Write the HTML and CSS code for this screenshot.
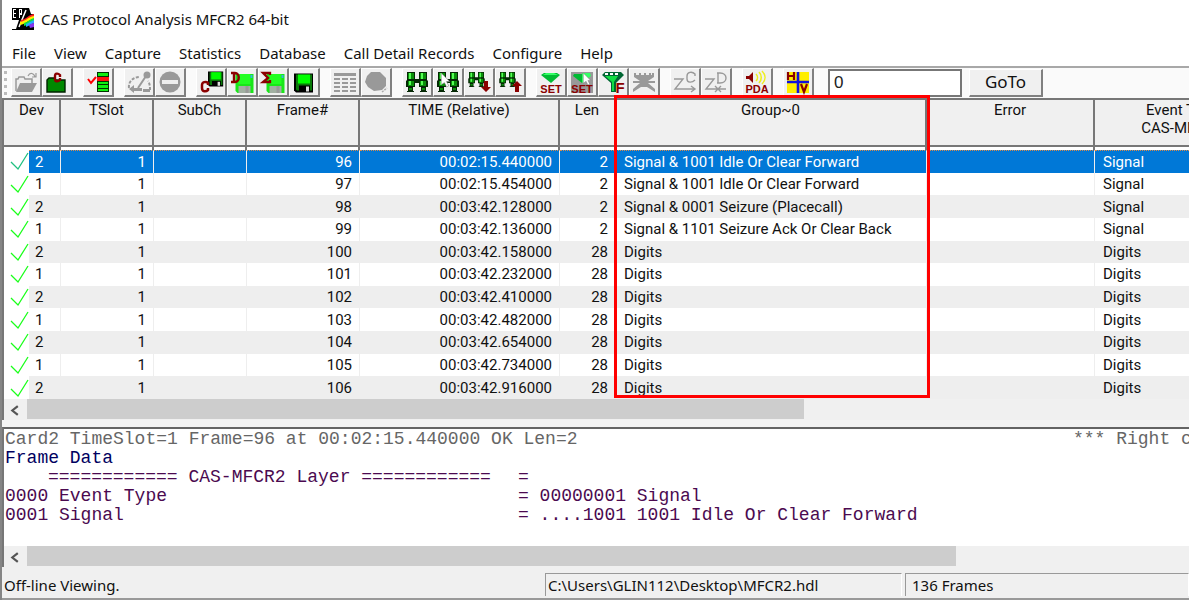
FILE: index.html
```html
<!DOCTYPE html>
<html lang="en">
<head>
<meta charset="utf-8">
<title>CAS Protocol Analysis MFCR2 64-bit</title>
<link rel="stylesheet" href="styles.css">
</head>
<body>
<svg class="defs" aria-hidden="true">
  <symbol id="check" viewBox="0 0 25 22"><path d="M7 12l7 7L24 3" fill="none" stroke="currentColor" stroke-width="1.3"/></symbol>
  <symbol id="disk" viewBox="0 0 20 19">
    <path d="M0 0h19v19H2L0 17z" fill="#000"/><path d="M2 1h16v16H3l-1-1z" fill="#0a7a0a"/>
    <path d="M4 1h12v9H4z" fill="#0f0"/><path d="M5 12h11v6H5z" fill="#000"/><path d="M12 13h3v5h-3z" fill="#ddd"/>
  </symbol>
  <symbol id="disklight" viewBox="0 0 18 19">
    <path d="M0 0h18v19H2L0 17z" fill="#19e619"/><path d="M3 0h12v10H3z" fill="#2f2"/>
    <path d="M3 12h12v7H3z" fill="#a2b0a2"/><path d="M10 12h3v7h-3z" fill="#999"/><path d="M15 1h2v3h-2z" fill="#3bd"/>
  </symbol>
  <symbol id="binoc" viewBox="0 0 22 20">
    <path d="M1 0h8v7h4V0h8v8l1 1v6h-2v4h1v1h-7v-1h1v-4h-2v-4H9v4H7v4h1v1H1v-1h1v-4H0V9l1-1z" fill="#052805"/>
    <path d="M2 1h6v6H2zM14 1h6v6h-6zM2 9h6v5H2zM14 9h6v5h-6zM3 16h3v2H3zM16 16h3v2h-3z" fill="#0a8f0a"/>
    <path d="M3 1h2v6H3zM15 1h2v6h-2zM3 9h2v4H3zM15 9h2v4h-2z" fill="#5f5"/>
  </symbol>
  <symbol id="cursor" viewBox="0 0 10 14"><path d="M1 0v11l3-2 2 4 2-1-2-4h3z" fill="#fff" stroke="#777" stroke-width=".5"/></symbol>
</svg>

<main class="window">
  <header class="titlebar">
    <svg class="app-icon" viewBox="0 0 22 22" aria-hidden="true">
      <path d="M0 0h22v22H0z" fill="#000"/>
      <path d="M1 1h3v1H2v3h2v1H2v3h2v1H1zM5 1h5v6H8v3H7V1zM17 0h5v6h-3zM0 12h7l-3 9H0z" fill="#fff"/>
      <path d="M8 2h1v3H8z" fill="#000"/>
      <path d="M14 2L7 19" stroke="#fff" stroke-width="1.5"/>
      <path d="M9 12c6-1 7-5 13-6v3c-7 1-8 5-14 6z" fill="#f22"/>
      <path d="M8 14c6-1 8-5 14-6v3c-6 1-8 5-14 6z" fill="#fe0"/>
      <path d="M12 15c4-1 6-4 10-5v3c-4 1-6 4-10 5z" fill="#1d4"/>
      <path d="M14 16c3-1 5-3 8-4v3c-3 1-5 3-8 4z" fill="#2af"/>
      <path d="M17 17c2-1 3-2 5-2v4l-4 1z" fill="#83e"/>
    </svg>
    <h1>CAS Protocol Analysis MFCR2 64-bit</h1>
  </header>

  <nav class="menu">
    <a href="#">File</a><a href="#">View</a><a href="#">Capture</a><a href="#">Statistics</a><a href="#">Database</a><a href="#">Call Detail Records</a><a href="#">Configure</a><a href="#">Help</a>
  </nav>

  <div class="toolbar">
    <span class="grip"></span>
    <div class="group">
      <button aria-label="Open"><svg viewBox="0 0 28 26"><path d="M4 22V10h2l1-2h5l1 2h7v4" fill="#eee" stroke="#999" stroke-width="1.5"/><path d="M4 23l4-9h17l-5 9z" fill="#999"/><path d="M16 7c2-4 6-3 7 1m-3 0h4V4" fill="none" stroke="#999" stroke-width="1.2"/></svg></button>
      <button aria-label="Close capture"><svg viewBox="0 0 28 26"><path d="M4 23V11l2-2h5l2 2h9v12z" fill="#080" stroke="#020" stroke-width="1.4"/><path d="M17 8V6c-2-2-5-2-5 1v3c0 3 3 3 5 1v-2" fill="none" stroke="#8b0000" stroke-width="2.4"/></svg></button>
    </div>
    <div class="group">
      <button aria-label="Filter frames"><svg viewBox="0 0 28 26"><path d="M4 10l3 4 5-6" fill="none" stroke="red" stroke-width="2"/><path d="M13 3h12v20H13z" fill="#030"/><path d="M14 4h10v3H14zM14 13h10v2H14zM14 16h10v3H14zM14 20h10v2H14z" fill="#1e1"/><path d="M13 8h12v4H13z" fill="#f11"/></svg></button>
    </div>
    <div class="group">
      <button aria-label="Start capture"><svg viewBox="0 0 28 26"><path d="M4 19c-1-6 4-11 11-11M25 21c0-3 0-6-2-9" fill="none" stroke="#999" stroke-width="2" stroke-dasharray="3 1.5"/><path d="M13 19l8-12" stroke="#999" stroke-width="2"/><circle cx="22" cy="6" r="3.5" fill="#999"/><path d="M4 20l5-4v3h8v3H9v2zM18 20h7v3h-7z" fill="#999"/></svg></button>
      <button aria-label="Stop capture"><svg viewBox="0 0 28 26"><circle cx="14" cy="13" r="10.5" fill="#999"/><path d="M6 11h16v4H6z" fill="#eee"/></svg></button>
    </div>
    <div class="group">
      <button aria-label="Save capture"><svg viewBox="0 0 28 26"><use href="#disk" x="11" y="2" width="16" height="16"/><path d="M11 16v-2c-2-2-6-1-6 2v3c0 4 4 4 6 2v-2" fill="none" stroke="#8b0000" stroke-width="2.5"/></svg></button>
      <button aria-label="Save data"><svg viewBox="0 0 28 26"><use href="#disklight" x="7" y="5" width="19" height="19"/><path d="M3 4h4c5 0 5 9 0 9H3m3-9v9" fill="none" stroke="#8b0000" stroke-width="2.4"/></svg></button>
      <button aria-label="Save summary"><svg viewBox="0 0 28 26"><use href="#disklight" x="7" y="5" width="19" height="19"/><path d="M11 6V4H4l5 5-5 4h7v-2" fill="none" stroke="#8b0000" stroke-width="2.3"/></svg></button>
      <button aria-label="Save"><svg viewBox="0 0 28 26"><use href="#disk" x="4" y="4" width="20" height="20"/></svg></button>
    </div>
    <div class="group">
      <button aria-label="Table"><svg viewBox="0 0 28 26"><path d="M3 4h22v3H3z" fill="#999"/><path d="M3 10h22M3 14h22M3 18h22M3 22h22" stroke="#999" stroke-width="1.8" stroke-dasharray="6 2"/></svg></button>
      <button aria-label="Chart"><svg viewBox="0 0 28 26"><path d="M9 3h9l6 6v8l-4 4-8 1-6-4-3-5 2-6z" fill="#999"/><path d="M20 23l5-4" stroke="#aaa" stroke-width="1.5" stroke-dasharray="2 1"/></svg></button>
    </div>
    <div class="group">
      <button aria-label="Find"><svg viewBox="0 0 28 26"><use href="#binoc" x="3" y="3" width="22" height="20"/></svg></button>
      <button aria-label="Find selected"><svg viewBox="0 0 28 26"><use href="#binoc" x="3" y="3" width="22" height="20"/><use href="#cursor" x="6" y="4" width="11" height="15"/></svg></button>
      <button aria-label="Find next"><svg viewBox="0 0 28 26"><use href="#binoc" x="3" y="3" width="17" height="15"/><path d="M19 12h4v6h3l-5 5-5-5h3z" fill="#8b0000"/></svg></button>
      <button aria-label="Find previous"><svg viewBox="0 0 28 26"><use href="#binoc" x="3" y="3" width="17" height="15"/><path d="M19 23h4v-6h3l-5-5-5 5h3z" fill="#8b0000"/></svg></button>
    </div>
    <div class="group">
      <button aria-label="Set filter"><svg viewBox="0 0 28 26"><path d="M4 6l3-2h13l3 2-9 8z" fill="#0b3"/><path d="M6 6h15l-4-2H9z" fill="#3f6"/><text x="14" y="24" class="tag">SET</text></svg></button>
      <button aria-label="Set filter from selection"><svg viewBox="0 0 28 26"><path d="M3 3h22v21H3z" fill="#999"/><path d="M6 5h8v9L5 7z" fill="#0b3"/><path d="M14 4h8l1 3-9 7z" fill="#3f6"/><use href="#cursor" x="14" y="4" width="10" height="13"/><text x="14" y="24" class="tag">SET</text></svg></button>
      <button aria-label="Filter"><svg viewBox="0 0 28 26"><path d="M3 6l3-3h16l3 3-8 8v9h-5v-9z" fill="#063"/><path d="M6 7h13l-4 6v9h-2v-9z" fill="#1d4"/><path d="M6 5h15" stroke="#fff" stroke-width="2" stroke-dasharray="3 2"/><text x="21" y="24" class="letter">F</text></svg></button>
      <button aria-label="Clear filter"><svg viewBox="0 0 28 26"><path d="M4 4h20v4l-6 4h7v2h-7l7 6v3l-8-5h-6l-8 5v-3l7-6H3v-2h7L4 8z" fill="#999"/><path d="M6 5h16" stroke="#eee" stroke-width="2" stroke-dasharray="3 2"/></svg></button>
    </div>
    <div class="group">
      <button aria-label="Jump to call"><svg viewBox="0 0 28 26"><path d="M3 10h9L4 20h20m-4-3l4 3-4 3M24 7V5c-3-3-8-2-8 2v3c0 4 5 4 8 1" fill="none" stroke="#999" stroke-width="1.4"/></svg></button>
      <button aria-label="Jump to data"><svg viewBox="0 0 28 26"><path d="M3 10h9L4 20h20M15 4h3c8 0 8 10 0 10h-3m1-10v10M13 17l6 6m0-6l-6 6" fill="none" stroke="#999" stroke-width="1.4"/></svg></button>
    </div>
    <div class="group">
      <button aria-label="Packet data analysis"><svg viewBox="0 0 28 26"><path d="M3 7h3l4-4v11l-4-4H3z" fill="#8b0000"/><path d="M13 5c2 2 2 5 0 7m3-9c3 3 3 8 0 11m3-12c4 4 4 9 0 13" fill="none" stroke="#ee2" stroke-width="1.6"/><text x="14" y="24" class="tag">PDA</text></svg></button>
    </div>
    <div class="group">
      <button aria-label="Split view"><svg viewBox="0 0 28 26"><path d="M3 3h22v21H3z" fill="#fe0"/><path d="M14 3v21M3 13h22" stroke="#11d" stroke-width="2.6"/><path d="M4 3v8m6-8v8M4 7h6M17 15l3 8 3-8" fill="none" stroke="#8b0000" stroke-width="2.2"/></svg></button>
    </div>
    <input class="goto-field" type="text" value="0" aria-label="Frame number">
    <button class="goto">GoTo</button>
  </div>

  <section class="frames">
    <div class="clip">
      <table>
        <colgroup><col class="c-check"><col class="c-dev"><col class="c-slot"><col class="c-slot"><col class="c-frame"><col class="c-time"><col class="c-len"><col class="c-group"><col class="c-error"><col class="c-event"></colgroup>
        <thead><tr><th colspan="2">Dev</th><th>TSlot</th><th>SubCh</th><th>Frame#</th><th>TIME (Relative)</th><th>Len</th><th>Group~0</th><th>Error</th><th>Event Type<br>CAS-MFCR2</th></tr></thead>
        <tbody>
          <tr class="selected"><td><svg><use href="#check"/></svg></td><td>2</td><td>1</td><td></td><td>96</td><td>00:02:15.440000</td><td>2</td><td>Signal &amp; 1001 Idle Or Clear Forward</td><td></td><td>Signal</td></tr>
          <tr><td><svg><use href="#check"/></svg></td><td>1</td><td>1</td><td></td><td>97</td><td>00:02:15.454000</td><td>2</td><td>Signal &amp; 1001 Idle Or Clear Forward</td><td></td><td>Signal</td></tr>
          <tr><td><svg><use href="#check"/></svg></td><td>2</td><td>1</td><td></td><td>98</td><td>00:03:42.128000</td><td>2</td><td>Signal &amp; 0001 Seizure (Placecall)</td><td></td><td>Signal</td></tr>
          <tr><td><svg><use href="#check"/></svg></td><td>1</td><td>1</td><td></td><td>99</td><td>00:03:42.136000</td><td>2</td><td>Signal &amp; 1101 Seizure Ack Or Clear Back</td><td></td><td>Signal</td></tr>
          <tr><td><svg><use href="#check"/></svg></td><td>2</td><td>1</td><td></td><td>100</td><td>00:03:42.158000</td><td>28</td><td>Digits</td><td></td><td>Digits</td></tr>
          <tr><td><svg><use href="#check"/></svg></td><td>1</td><td>1</td><td></td><td>101</td><td>00:03:42.232000</td><td>28</td><td>Digits</td><td></td><td>Digits</td></tr>
          <tr><td><svg><use href="#check"/></svg></td><td>2</td><td>1</td><td></td><td>102</td><td>00:03:42.410000</td><td>28</td><td>Digits</td><td></td><td>Digits</td></tr>
          <tr><td><svg><use href="#check"/></svg></td><td>1</td><td>1</td><td></td><td>103</td><td>00:03:42.482000</td><td>28</td><td>Digits</td><td></td><td>Digits</td></tr>
          <tr><td><svg><use href="#check"/></svg></td><td>2</td><td>1</td><td></td><td>104</td><td>00:03:42.654000</td><td>28</td><td>Digits</td><td></td><td>Digits</td></tr>
          <tr><td><svg><use href="#check"/></svg></td><td>1</td><td>1</td><td></td><td>105</td><td>00:03:42.734000</td><td>28</td><td>Digits</td><td></td><td>Digits</td></tr>
          <tr><td><svg><use href="#check"/></svg></td><td>2</td><td>1</td><td></td><td>106</td><td>00:03:42.916000</td><td>28</td><td>Digits</td><td></td><td>Digits</td></tr>
        </tbody>
      </table>
    </div>
    <div class="highlight"></div>
    <div class="scrollbar"><button aria-label="Scroll left"><svg viewBox="0 0 10 10"><path d="M8 1L3 5l5 4" fill="none" stroke="#555" stroke-width="2"/></svg></button><span class="thumb thumb-frames"></span></div>
  </section>

  <section class="decode">
    <div class="log">
      <p class="gray"><span>Card2 TimeSlot=1 Frame=96 at 00:02:15.440000 OK Len=2</span><span class="hint">*** Right click</span></p>
      <p class="navy"><span>Frame Data</span></p>
      <p><span class="layer">============ CAS-MFCR2 Layer ============</span><span class="value">=</span></p>
      <p><span>0000 Event Type</span><span class="value">= 00000001 Signal</span></p>
      <p><span>0001 Signal</span><span class="value">= ....1001 1001 Idle Or Clear Forward</span></p>
    </div>
    <div class="scrollbar"><button aria-label="Scroll left"><svg viewBox="0 0 10 10"><path d="M8 1L3 5l5 4" fill="none" stroke="#555" stroke-width="2"/></svg></button><span class="thumb thumb-decode"></span></div>
  </section>

  <footer class="status"><span class="message">Off-line Viewing.</span><span class="panel">C:\Users\GLIN112\Desktop\MFCR2.hdl</span><span class="panel count">136 Frames</span></footer>
</main>
</body>
</html>
```
FILE: styles.css
```css
* { box-sizing: border-box; }
body { margin: 0; background: #fff; color: #111; font-family: "Noto Sans", sans-serif; font-size: 15px; }
.defs { position: absolute; width: 0; height: 0; }
.window { min-height: 100vh; border-left: 2px solid #858585; overflow: hidden; display: flex; flex-direction: column; }

.titlebar { display: flex; align-items: center; gap: 7px; height: 38px; padding-left: 10px; }
.titlebar h1 { margin: 0; font-size: 15px; font-weight: 400; }
.app-icon { width: 22px; height: 22px; }

.menu { display: flex; gap: 18px; height: 30px; padding: 2px 0 0 10px; align-items: center; border-bottom: 2px solid #a8a8a8; white-space: nowrap; }
.menu a { color: #111; text-decoration: none; }

.toolbar { display: flex; align-items: center; height: 32px; padding: 0 0 1px 2px; background: #fafafa; border-bottom: 2px solid #777; }
.grip { width: 3px; height: 24px; margin-right: 4px; background: repeating-linear-gradient(#bbb 0 3px, transparent 3px 7px); }
.group { display: flex; margin-right: 10px; }
.group button { width: 31px; height: 29px; padding: 0; background: #f0f0f0; border: solid; border-width: 1px 2px 2px 1px; border-color: #fff #808080 #808080 #fff; }
.group svg { display: block; width: 28px; height: 26px; }
.tag, .letter { font: 700 11px "Liberation Sans", sans-serif; fill: #8b0000; text-anchor: middle; }
.letter { font-size: 15px; }
.goto-field { width: 134px; height: 28px; margin: 0 7px 0 4px; padding: 0 4px; border: 2px solid #777; background: #fff; color: #222; font: 17px "Liberation Sans", sans-serif; }
.goto { width: 74px; height: 28px; background: #f0f0f0; border: solid; border-width: 1px 2px 2px 1px; border-color: #fff #808080 #808080 #fff; color: #111; font: 17px/20px "Noto Sans", sans-serif; padding: 0; }

.frames { position: relative; border-left: 2px solid #777; }
.clip { overflow: hidden; }
table { width: 1260px; height: 299px; border-collapse: separate; border-spacing: 0; table-layout: fixed; font: 15px/18px Roboto, sans-serif; }
.c-check { width: 25px; }
.c-dev { width: 32px; }
.c-slot { width: 93px; }
.c-frame { width: 113px; }
.c-time { width: 200px; }
.c-len { width: 56px; }
.c-group { width: 311px; }
.c-error { width: 168px; }
.c-event { width: 176px; }
th { height: 50px; padding: 1px 0 0; vertical-align: top; font-weight: 400; background: linear-gradient(#777, #777) 0 45px / 100% 2px no-repeat, linear-gradient(#fff, #fff) 0 47px / 100% 3px no-repeat, #f0f0f0; border-right: 2px solid #777; }
td { padding: 0 7px; text-align: right; border-right: 1px solid #eee; white-space: nowrap; }
tbody tr:nth-child(odd) { background: #eee; }
td:first-child { background: #fff; padding: 0; border-right: 0; color: #1aff1a; }
td:first-child svg { display: block; width: 25px; height: 22px; }
td:nth-child(2), td:nth-child(8), td:nth-child(10) { padding-left: 8px; text-align: left; }
td:nth-child(2) { padding-left: 6px; }
tbody tr.selected { background: #0078d7; color: #fff; }
.selected td:not(:first-child) { border-top: 1px dotted #d98a4a; }
.selected td:first-child { color: #20c080; }
.highlight { position: absolute; left: 610px; top: -5px; width: 316px; height: 303px; border: 3px solid #f00; }

.scrollbar { display: flex; height: 21px; background: #f0f0f0; }
.scrollbar button { width: 23px; padding: 0 2px 0 0; border: 0; background: none; }
.scrollbar svg { width: 11px; height: 11px; vertical-align: middle; }
.thumb { background: #cdcdcd; margin-bottom: 1px; }
.thumb-frames { width: 777px; }
.thumb-decode { width: 929px; }

.decode { flex: 1; display: flex; flex-direction: column; margin-top: 7px; border-left: 2px solid #777; border-top: 2px solid #666; box-shadow: 0 -7px #f4f4f4; }
.log { flex: 1; padding: 1px 0 0 1px; font: 18px/19px "Liberation Mono", monospace; color: #4b0a50; }
.log p { display: grid; grid-template-columns: 513px 555px 1fr; margin: 0; white-space: pre; }
.log .gray { color: #666; }
.log .navy { color: #000060; }
.layer { padding-left: 43px; }
.value { grid-column: 2; }
.hint { grid-column: 3; }

.status { display: grid; grid-template-columns: 538px 357px 1fr; gap: 3px; padding: 6px 0 2px 2px; background: #f0f0f0; border-bottom: 2px solid #999; line-height: 22px; white-space: nowrap; }
.message { padding-top: 1px; }
.panel { padding-left: 2px; border: 1px solid #aaa; border-color: #999 #fff #fff #999; border-bottom: 0; }
.count { padding-left: 6px; }
```
